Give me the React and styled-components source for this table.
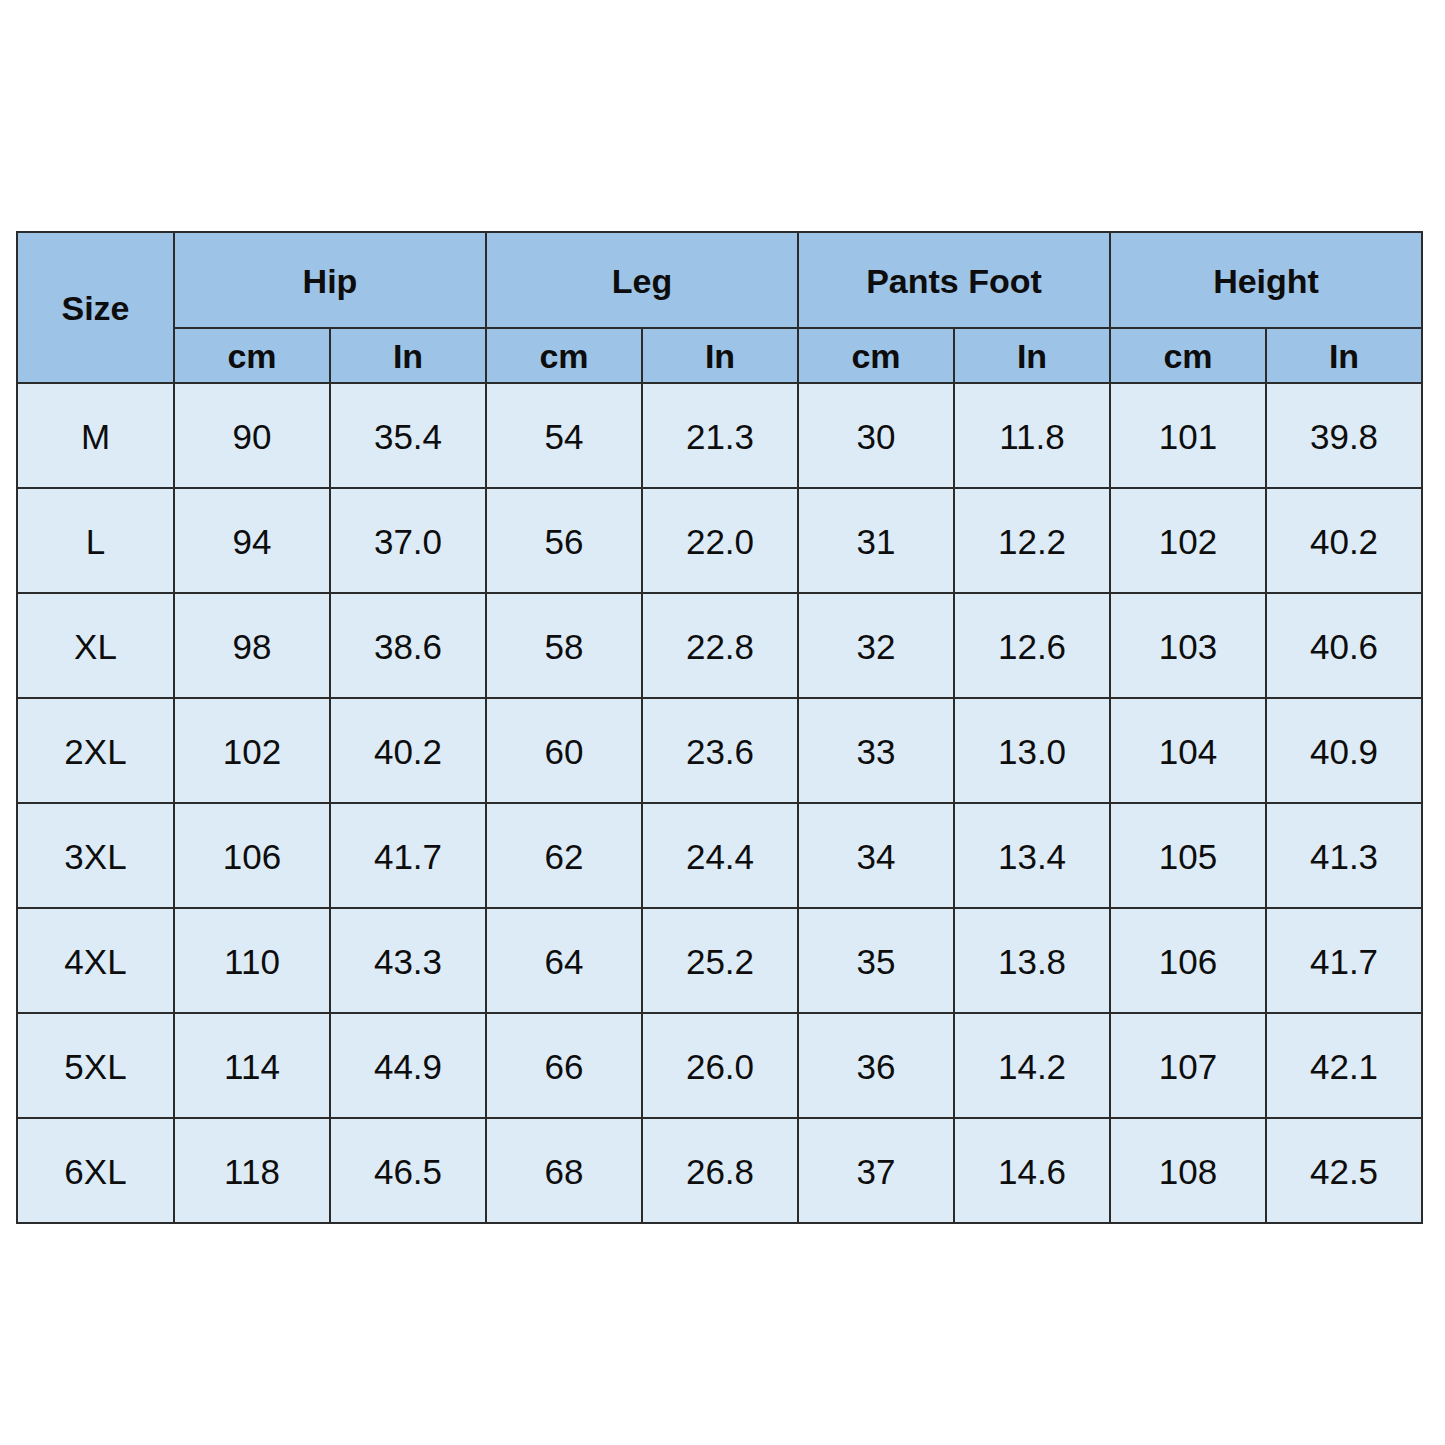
import styled, { createGlobalStyle } from "styled-components";

const rows = [
  ["M", "90", "35.4", "54", "21.3", "30", "11.8", "101", "39.8"],
  ["L", "94", "37.0", "56", "22.0", "31", "12.2", "102", "40.2"],
  ["XL", "98", "38.6", "58", "22.8", "32", "12.6", "103", "40.6"],
  ["2XL", "102", "40.2", "60", "23.6", "33", "13.0", "104", "40.9"],
  ["3XL", "106", "41.7", "62", "24.4", "34", "13.4", "105", "41.3"],
  ["4XL", "110", "43.3", "64", "25.2", "35", "13.8", "106", "41.7"],
  ["5XL", "114", "44.9", "66", "26.0", "36", "14.2", "107", "42.1"],
  ["6XL", "118", "46.5", "68", "26.8", "37", "14.6", "108", "42.5"],
];

const groups = ["Hip", "Leg", "Pants Foot", "Height"];

const App = () => {
  return (
    <>
      <Global />
      <Page>
        <Table>
          <colgroup>
            <col style={{ width: 157 }} />
            {Array.from({ length: 8 }).map((_, i) => (
              <col key={i} style={{ width: 156 }} />
            ))}
          </colgroup>
          <thead>
            <TopRow>
              <Head rowSpan={2}>Size</Head>
              {groups.map((g) => (
                <Head key={g} colSpan={2} $top>
                  {g}
                </Head>
              ))}
            </TopRow>
            <UnitRow>
              {groups.map((g) => [
                <Head key={g + "cm"}>cm</Head>,
                <Head key={g + "in"}>In</Head>,
              ])}
            </UnitRow>
          </thead>
          <tbody>
            {rows.map((r) => (
              <DataRow key={r[0]}>
                {r.map((v, i) => (
                  <Cell key={i}>{v}</Cell>
                ))}
              </DataRow>
            ))}
          </tbody>
        </Table>
      </Page>
    </>
  );
};

const Global = createGlobalStyle`
  body {
    margin: 0;
    background: #fff;
    font-family: "Liberation Sans", Arial, sans-serif;
  }
`;

const Page = styled.div`
  width: 1445px;
  height: 1445px;
  padding: 231px 0 0 16px;
  box-sizing: border-box;
`;

const Table = styled.table`
  border-collapse: collapse;
  table-layout: fixed;
  width: 1407px;
  border: 2px solid #222;
`;

const TopRow = styled.tr`
  height: 96px;
`;

const UnitRow = styled.tr`
  height: 55px;
`;

const DataRow = styled.tr`
  height: 105px;
`;

const Head = styled.th`
  background: #9dc3e6;
  border: 2px solid #2b2b2b;
  color: #0d0d0d;
  font-size: 34px;
  font-weight: bold;
  text-align: center;
  padding: 0;
  vertical-align: ${(p) => (p.$top ? "top" : "middle")};
  padding-top: ${(p) => (p.$top ? "29px" : "2px")};
`;

const Cell = styled.td`
  background: #ddebf7;
  border: 2px solid #2b2b2b;
  color: #0d0d0d;
  font-size: 35px;
  text-align: center;
  padding: 2px 0 0;
`;

export default App;
